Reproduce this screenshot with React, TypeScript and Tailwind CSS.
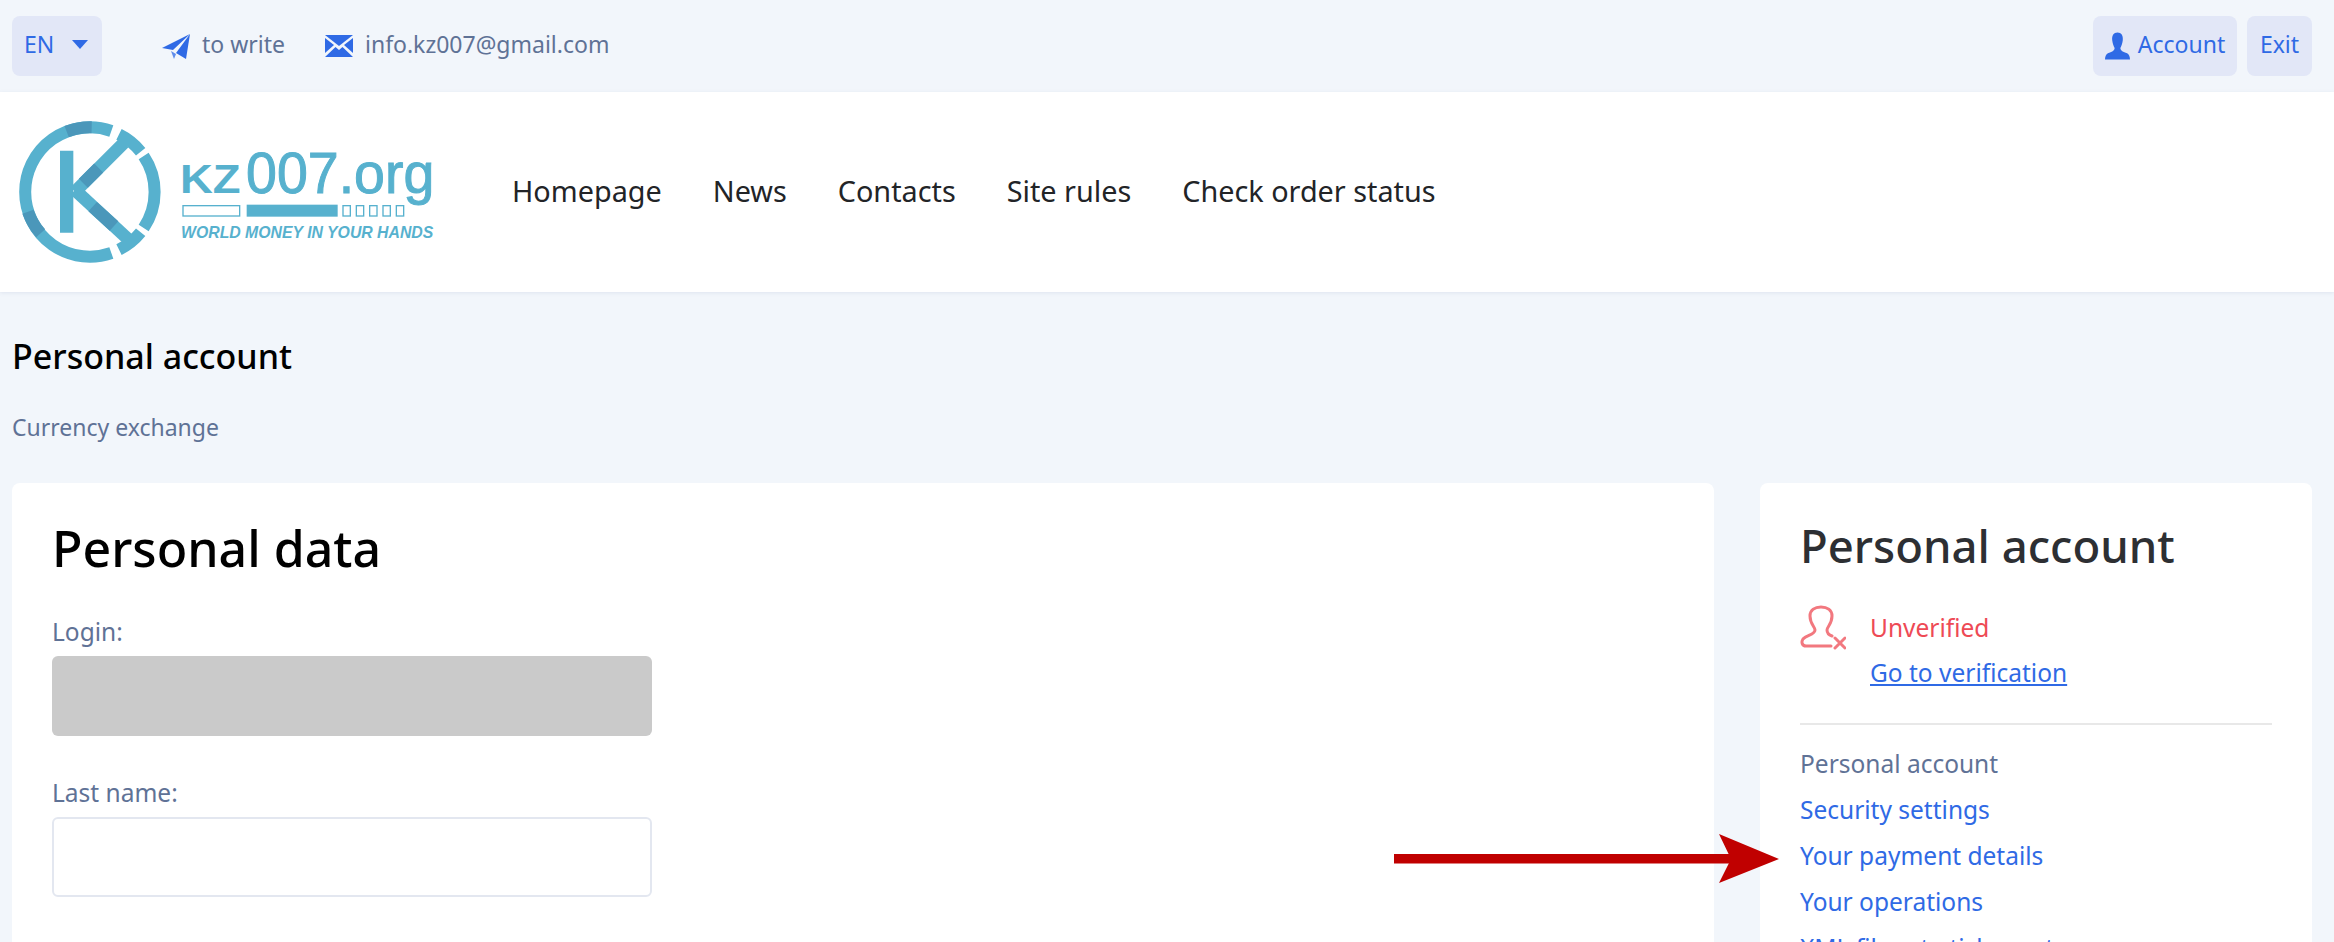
import React from "react";

const NAV = ["Homepage", "News", "Contacts", "Site rules", "Check order status"];
const MENU = ["Security settings", "Your payment details", "Your operations", "XML file rate ticker setup"];

const Logo = () => (
  <svg width="416" height="144" viewBox="57 60 1248 432" fill="none">
    <g stroke="#57b1ce" strokeWidth="36">
      <path d="M 334 459 A 194 194 0 1 1 334 93" />
      <path d="M 357 103 A 194 194 0 0 1 422 155" />
      <path d="M 431 168 A 194 194 0 0 1 431 384" />
      <path d="M 422 397 A 194 194 0 0 1 357 449" />
      <path d="M 200 152 V 398" strokeWidth="40" />
      <path d="M 225 275 L 372 128" strokeWidth="38" />
      <path d="M 225 270 L 385 418" strokeWidth="38" />
    </g>
    <g stroke="#4b97ba" strokeWidth="36">
      <path d="M 200 95 A 194 194 0 0 1 275 82" />
      <path d="M 84 335 A 194 194 0 0 0 122 400" />
      <path d="M 250 250 L 296 204" strokeWidth="38" />
      <path d="M 278 320 L 342 378" strokeWidth="38" />
    </g>
    <text x="540" y="278" fill="#57b1ce" fontFamily="Liberation Sans" fontSize="172" fontWeight="700" textLength="182" lengthAdjust="spacingAndGlyphs" style={{ fontVariant: "small-caps" }}>kz</text>
    <text x="738" y="278" fill="#57b1ce" stroke="#57b1ce" strokeWidth="3" fontFamily="Liberation Sans" fontSize="172" textLength="565" lengthAdjust="spacingAndGlyphs">007.org</text>
    <rect x="549" y="317" width="170" height="31" stroke="#57b1ce" strokeWidth="4" />
    <rect x="740" y="314" width="273" height="36" fill="#57b1ce" />
    {[1029, 1069, 1109, 1149, 1189].map((x) => (
      <rect key={x} x={x} y="317" width="22" height="31" stroke="#57b1ce" strokeWidth="4" />
    ))}
    <text x="543" y="415" fill="#57b1ce" fontFamily="Liberation Sans" fontSize="50" fontWeight="700" fontStyle="italic" textLength="757" lengthAdjust="spacingAndGlyphs">WORLD MONEY IN YOUR HANDS</text>
  </svg>
);

const PlaneIcon = () => (
  <svg width="28" height="25" viewBox="0 0 28 25" fill="#2f6ae5">
    <path d="M 0 14 L 28 0 L 11 16 Z" />
    <path d="M 28 0 L 24 25 L 14 19 Z" />
    <path d="M 9 17 L 12 25 L 14 20 Z" opacity="0.75" />
  </svg>
);

const MailIcon = () => (
  <svg width="28" height="22" viewBox="0 0 28 22" fill="#2f6ae5">
    <path d="M 0 0 H 28 L 14 11 Z" />
    <path d="M 0 3 L 9 10 L 0 18 Z" />
    <path d="M 28 3 L 19 10 L 28 18 Z" />
    <path d="M 0 22 L 10.5 12 L 14 15 L 17.5 12 L 28 22 Z" />
  </svg>
);

const UserIcon = () => (
  <svg width="25" height="28" viewBox="0 0 26 28" fill="#2f6ae5">
    <path d="M 13 0 C 17 0 19 3 18.5 8 C 18 12 17 14 16 16 C 16 19 19 20 23 21.5 C 25 22.5 26 25 26 28 H 0 C 0 25 1 22.5 3 21.5 C 7 20 10 19 10 16 C 9 14 8 12 7.5 8 C 7 3 9 0 13 0 Z" />
  </svg>
);

const UnverifiedIcon = () => (
  <svg width="46" height="46" viewBox="0 0 46 46" fill="none" stroke="#f2787f" strokeWidth="3" strokeLinecap="round">
    <path d="M 31 41 H 6 C 2 41 1 37 3 34 C 6 30 15 30 15 25 C 15 22 10 19 10 11 C 10 5 15 2 21 2 C 27 2 32 5 32 11 C 32 19 27 22 27 25 C 27 28 29 30 32 31" />
    <path d="M 35 33 L 45 43 M 45 33 L 35 43" />
  </svg>
);

const Arrow = () => (
  <svg className="absolute left-[1393px] top-[834px]" width="388" height="50" viewBox="0 0 388 50" fill="#c00000">
    <rect x="1" y="20" width="337" height="9.5" />
    <path d="M 326 0 L 386 25 L 326 49 L 338 25 Z" />
  </svg>
);

const App = () => {
  return (
    <div className="relative h-[942px] overflow-hidden bg-[#f2f6fb] font-['Noto_Sans',sans-serif] text-[24.5px] text-[#5f7296]">
      <div className="flex h-[92px] items-center justify-between pl-3 pr-[22px] text-[23px]">
        <div className="flex items-center">
          <div className="flex h-[60px] w-[90px] items-center gap-[18px] rounded-lg bg-[#e2e7f7] pb-[3px] pl-3 text-[#2f6ae5]">
            EN
            <span className="h-0 w-0 border-x-[8px] border-t-[9px] border-x-transparent border-t-[#2f6ae5]" />
          </div>
          <div className="ml-[60px] flex items-center gap-3">
            <PlaneIcon />
            <span className="pb-[3px]">to write</span>
          </div>
          <div className="ml-10 flex items-center gap-3">
            <MailIcon />
            <span className="pb-[3px]">info.kz007@gmail.com</span>
          </div>
        </div>
        <div className="flex items-center gap-[10px] text-[#2f6ae5]">
          <div className="flex h-[60px] w-[144px] items-center justify-center gap-2 rounded-lg bg-[#e2e7f7]">
            <UserIcon />
            <span className="pb-[3px]">Account</span>
          </div>
          <div className="flex h-[60px] w-[65px] items-center justify-center rounded-lg bg-[#e2e7f7] pb-[3px]">Exit</div>
        </div>
      </div>

      <div className="flex h-[200px] items-center bg-white pl-[19px] shadow-[0_1px_4px_rgba(90,110,160,0.12)]">
        <Logo />
        <nav className="ml-[77px] flex items-center gap-[51px] pb-[3px] text-[28.8px] text-[#222427]">
          {NAV.map((item) => (
            <span key={item}>{item}</span>
          ))}
        </nav>
      </div>

      <div className="px-3">
        <h1 className="mt-[44px] text-[34px] leading-10 font-medium text-black">Personal account</h1>
        <p className="mt-[39px] text-[23px] leading-6">Currency exchange</p>

        <div className="mt-[44px] flex items-start gap-[46px]">
          <div className="h-[600px] w-[1702px] rounded-lg bg-white px-10 pt-[33px]">
            <h2 className="text-[50px] leading-[64px] font-medium text-black">Personal data</h2>
            <label className="mt-[38px] block leading-7">Login:</label>
            <div className="mt-[10px] h-[80px] w-[600px] rounded-md bg-[#cacaca]" />
            <label className="mt-[43px] block leading-7">Last name:</label>
            <div className="mt-[10px] h-[80px] w-[600px] rounded-md border-2 border-[#e3e7f0] bg-white" />
          </div>

          <div className="h-[600px] w-[552px] rounded-lg bg-white px-10 pt-[30px]">
            <h2 className="text-[45.5px] leading-[64px] font-medium text-[#2d2f33]">Personal account</h2>
            <div className="mt-[28px] flex items-start gap-6">
              <UnverifiedIcon />
              <div className="pt-[9px]">
                <div className="leading-7 text-[#ee4a55]">Unverified</div>
                <a className="mt-[17px] block leading-7 text-[#2f6ae5] underline">Go to verification</a>
              </div>
            </div>
            <div className="mt-[36px] h-0.5 bg-[#e8e8e8]" />
            <div className="mt-[25px] leading-7">Personal account</div>
            {MENU.map((item) => (
              <div key={item} className="mt-[18px] leading-7 text-[#2f6ae5]">{item}</div>
            ))}
          </div>
        </div>
      </div>

      <Arrow />
    </div>
  );
};

export default App;
